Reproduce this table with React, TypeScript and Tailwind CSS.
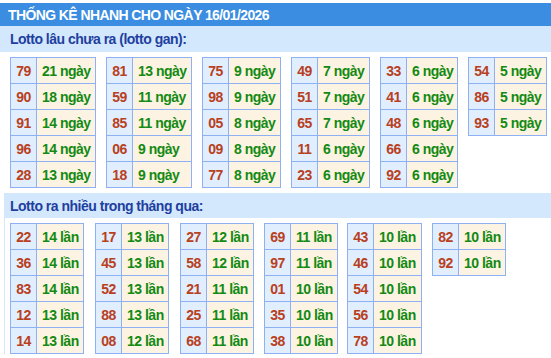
type Row = [string, string];
type Block = { w: string; ml: string; rows: Row[] };

const gan: Block[] = [
  { w: 'w-[59px]', ml: '', rows: [['79', '21 ngày'], ['90', '18 ngày'], ['91', '14 ngày'], ['96', '14 ngày'], ['28', '13 ngày']] },
  { w: 'w-[59px]', ml: 'ml-[10px]', rows: [['81', '13 ngày'], ['59', '11 ngày'], ['85', '11 ngày'], ['06', '9 ngày'], ['18', '9 ngày']] },
  { w: 'w-[52px]', ml: 'ml-[10px]', rows: [['75', '9 ngày'], ['98', '9 ngày'], ['05', '8 ngày'], ['09', '8 ngày'], ['77', '8 ngày']] },
  { w: 'w-[52px]', ml: 'ml-[10px]', rows: [['49', '7 ngày'], ['51', '7 ngày'], ['65', '7 ngày'], ['11', '6 ngày'], ['23', '6 ngày']] },
  { w: 'w-[51px]', ml: 'ml-[10px]', rows: [['33', '6 ngày'], ['41', '6 ngày'], ['48', '6 ngày'], ['66', '6 ngày'], ['92', '6 ngày']] },
  { w: 'w-[52px]', ml: 'ml-[10px]', rows: [['54', '5 ngày'], ['86', '5 ngày'], ['93', '5 ngày']] },
];

const nhieu: Block[] = [
  { w: 'w-[47px]', ml: '', rows: [['22', '14 lần'], ['36', '14 lần'], ['83', '14 lần'], ['12', '13 lần'], ['14', '13 lần']] },
  { w: 'w-[47px]', ml: 'ml-[11px]', rows: [['17', '13 lần'], ['45', '13 lần'], ['52', '13 lần'], ['88', '13 lần'], ['08', '12 lần']] },
  { w: 'w-[47px]', ml: 'ml-[11px]', rows: [['27', '12 lần'], ['58', '12 lần'], ['21', '11 lần'], ['25', '11 lần'], ['68', '11 lần']] },
  { w: 'w-[47px]', ml: 'ml-[10px]', rows: [['69', '11 lần'], ['97', '11 lần'], ['01', '10 lần'], ['35', '10 lần'], ['38', '10 lần']] },
  { w: 'w-[48px]', ml: 'ml-[9px]', rows: [['43', '10 lần'], ['46', '10 lần'], ['54', '10 lần'], ['56', '10 lần'], ['78', '10 lần']] },
  { w: 'w-[47px]', ml: 'ml-[10px]', rows: [['82', '10 lần'], ['92', '10 lần']] },
];

function LotoTable({ block }: { block: Block }) {
  return (
    <div className={`flex flex-col border-l border-t border-[#8db1f3] ${block.ml}`}>
      {block.rows.map(([num, val]) => (
        <div key={num} className="flex h-[26px]">
          <div className="flex w-[26px] items-center justify-center border-b border-r border-[#8db1f3] bg-[#e1eefd] text-[#b8401e]">
            {num}
          </div>
          <div
            className={`flex items-center whitespace-nowrap border-b border-r border-[#8db1f3] bg-[#fdf3e2] pl-[5px] text-[#138a13] ${block.w}`}
          >
            {val}
          </div>
        </div>
      ))}
    </div>
  );
}

function Section({ title, tables, indent }: { title: string; tables: Block[]; indent?: boolean }) {
  return (
    <div className={indent ? 'ml-[4px] border-l border-[#d3e8fc]' : ''}>
      <div
        className={`flex items-center bg-[#d3e8fc] text-[#1f3f9f] ${indent ? 'h-[25px] pl-[5px]' : 'h-[26px] pl-[10px]'}`}
      >
        {title}
      </div>
      <div className={`flex items-start pt-[5px] ${indent ? 'pl-[5px]' : 'pl-[10px]'}`}>
        {tables.map((t, i) => (
          <LotoTable key={i} block={t} />
        ))}
      </div>
    </div>
  );
}

export default function App() {
  return (
    <div
      className="h-[358px] w-[551px] overflow-hidden bg-white pt-[3px] text-[14px] font-bold leading-none tracking-[-0.5px]"
      style={{ fontFamily: '"Liberation Sans", Arial, sans-serif' }}
    >
      <div className="flex h-[23px] items-center bg-[#3a8de0] pl-[8px] tracking-[-0.6px] text-white">
        THỐNG KÊ NHANH CHO NGÀY 16/01/2026
      </div>
      <Section title="Lotto lâu chưa ra (lotto gan):" tables={gan} />
      <div className="h-[5px]" />
      <Section title="Lotto ra nhiều trong tháng qua:" tables={nhieu} indent />
    </div>
  );
}
